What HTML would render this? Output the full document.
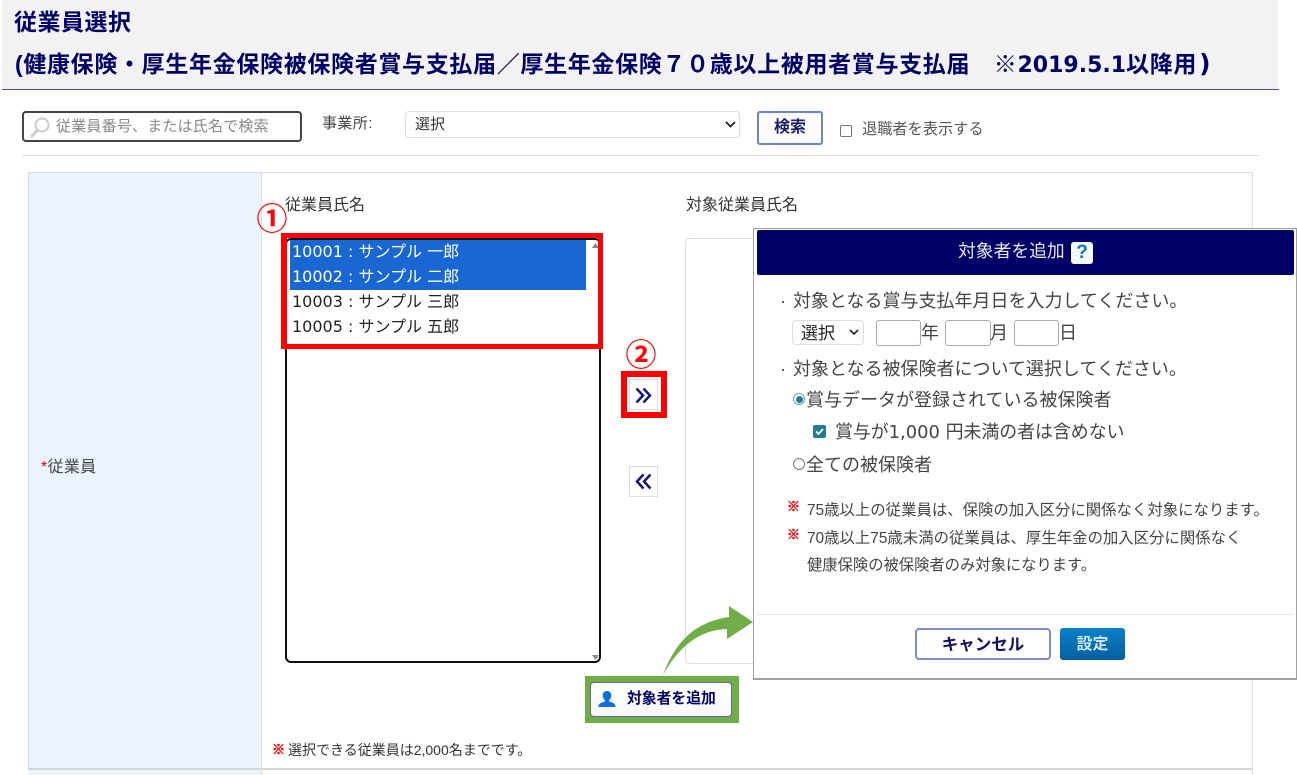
<!DOCTYPE html>
<html lang="ja"><head><meta charset="utf-8"><title>従業員選択</title>
<style>
html,body{margin:0;padding:0;background:#fff}
body{width:1297px;height:775px;position:relative;overflow:hidden;font-family:"Liberation Sans","Noto Sans CJK JP",sans-serif;color:#333;filter:blur(.3px)}
div,span.a{position:absolute;box-sizing:border-box}
.t{white-space:nowrap;line-height:20px;height:20px;font-size:15px}
.n{font-family:"DejaVu Sans","Noto Sans CJK JP",sans-serif}
.navy{color:#000066;font-weight:700}
.k{color:#f00;font-weight:700;-webkit-text-stroke:.6px #f00}
svg{position:absolute;overflow:visible}
</style></head><body>
<div style="left:2px;top:0;width:1276px;height:89px;background:#f2f2f2"></div>
<div style="left:2px;top:89px;width:1277px;height:1px;background:#4f4f9f"></div>
<div class="t navy" style="left:14px;top:12px;font-size:23px;letter-spacing:.5px">従業員選択</div>
<div class="t navy" style="left:15px;top:54px;font-size:23px;letter-spacing:.67px">(健康保険・厚生年金保険被保険者賞与支払届／厚生年金保険７０歳以上被用者賞与支払届　※<span class="n" style="font-size:22px;letter-spacing:0">2019.5.1</span>以降用<span class="n" style="font-size:25px;letter-spacing:0;margin-left:2px">)</span></div>

<div style="left:22px;top:111px;width:280px;height:31px;border:2px solid #444;border-radius:4px;background:#fff"></div>
<svg style="left:29px;top:116px" width="22" height="22" viewBox="0 0 22 22"><circle cx="13" cy="9" r="6.5" fill="none" stroke="#ccc" stroke-width="2"/><path d="M8.500 14L3 20" stroke="#ccc" stroke-width="3" stroke-linecap="round"/></svg>
<div class="t" style="left:56px;top:117px;font-size:15px;color:#888;letter-spacing:.2px">従業員番号、または氏名で検索</div>
<div class="t" style="left:322px;top:114px;font-size:15px;color:#444;letter-spacing:.4px">事業所:</div>
<div style="left:405px;top:111px;width:335px;height:27px;border:1px solid #ddd;border-radius:4px;background:#fff"></div>
<div class="t" style="left:415px;top:115px;font-size:15px">選択</div>
<svg style="left:725px;top:121px" width="11" height="7" viewBox="0 0 11 7"><path d="M1 1l4.500 4.500L10 1" fill="none" stroke="#222" stroke-width="1.800"/></svg>
<div style="left:757px;top:111px;width:66px;height:34px;border:2px solid #7384c6;border-radius:3px;background:#fbfbff"></div>
<div class="t navy" style="left:757px;width:66px;text-align:center;top:118px;font-size:16px;color:#1a2060;">検索</div>
<div style="left:840px;top:125px;width:12px;height:12px;border:1.500px solid #777;border-radius:2px;background:#fff"></div>
<div class="t" style="left:862px;top:120px;font-size:15.200px;color:#555">退職者を表示する</div>
<div style="left:22px;top:155px;width:1238px;height:1px;background:#ddd"></div>

<div style="left:28px;top:172px;width:1225px;height:598px;border:1px solid #ddd;border-bottom:2px solid #d4d4d4;background:#fff"></div>
<div style="left:29px;top:173px;width:232px;height:595px;background:#ebf4fc"></div>
<div style="left:261px;top:173px;width:1px;height:602px;background:#ddd"></div>
<div style="left:28px;top:770px;width:233px;height:5px;background:#ebf4fc"></div>
<div style="left:1252px;top:770px;width:1px;height:5px;background:#ddd"></div>
<div class="t" style="left:41px;top:458px;font-size:16px;letter-spacing:.3px;color:#444"><span style="color:#e00">*</span>従業員</div>

<div class="t" style="left:285px;top:196px;font-size:16px;color:#333">従業員氏名</div>
<div class="t" style="left:686px;top:196px;font-size:16px;color:#333">対象従業員氏名</div>

<div style="left:685px;top:238px;width:80px;height:426px;border:1px solid #ddd;border-radius:5px;background:#fff"></div>

<div style="left:285px;top:238px;width:316px;height:425px;border:2px solid #111;border-radius:6px;background:#fff"></div>
<div style="left:290px;top:240px;width:296px;height:50px;background:#1967d2"></div>
<div class="t n" style="left:292px;top:242px;font-size:16px;color:#fff">10001 : サンプル 一郎</div>
<div class="t n" style="left:292px;top:267px;font-size:16px;color:#fff">10002 : サンプル 二郎</div>
<div class="t n" style="left:292px;top:292px;font-size:16px;color:#222">10003 : サンプル 三郎</div>
<div class="t n" style="left:292px;top:317px;font-size:16px;color:#222">10005 : サンプル 五郎</div>
<svg style="left:592px;top:243px" width="7" height="5"><path d="M3.500 0L7 5H0z" fill="#888"/></svg>
<svg style="left:592px;top:655px" width="7" height="5"><path d="M3.500 5L7 0H0z" fill="#888"/></svg>
<div style="left:281px;top:233px;width:322px;height:116px;border:5px solid #ff0000;border-left-width:6px"></div>
<div class="t" style="left:256px;top:209px;width:32px;text-align:center;font-size:31px;line-height:22px;height:22px;font-weight:700;color:#f00">①</div>

<div class="t" style="left:625px;top:345px;width:32px;text-align:center;font-size:31px;line-height:22px;height:22px;font-weight:700;color:#f00">②</div>
<div style="left:621px;top:371px;width:46px;height:47px;background:#f00"></div>
<div style="left:627px;top:377px;width:34px;height:35px;background:#fff"></div>
<div style="left:629px;top:379px;width:29px;height:31px;border:1px solid #ddd;background:#fff"></div>
<svg style="left:635px;top:387px" width="18" height="17" viewBox="0 0 18 17"><path d="M1.500 1.500L8 8.500L1.500 15.500M8.500 1.500L15 8.500L8.500 15.500" fill="none" stroke="#15157f" stroke-width="2.500"/></svg>
<div style="left:629px;top:466px;width:29px;height:31px;border:1px solid #ddd;background:#fff"></div>
<svg style="left:635px;top:473px" width="18" height="17" viewBox="0 0 18 17"><path d="M8.500 1.500L2 8.500L8.500 15.500M15.500 1.500L9 8.500L15.500 15.500" fill="none" stroke="#15157f" stroke-width="2.500"/></svg>

<div style="left:585px;top:676px;width:154px;height:47px;background:#70ad47"></div>
<div style="left:590px;top:682px;width:142px;height:35px;border:1.500px solid #6a64b0;border-radius:4px;background:linear-gradient(#fff,#f7f7fb)"></div>
<svg style="left:597px;top:690px" width="20" height="18" viewBox="0 0 20 18"><path d="M10 1c3 0 4.300 2.200 4.300 4.500 0 2-1 3.800-2.300 4.800v1.200c2.500.8 6 1.500 6.500 4.500v1H1.500v-1c.5-3 4-3.700 6.500-4.500v-1.200C6.700 9.300 5.700 7.500 5.700 5.500 5.700 3.200 7 1 10 1z" fill="#0a6fd6"/></svg>
<div class="t navy" style="left:627px;top:689px;font-size:14.800px;">対象者を追加</div>

<div class="t k" style="left:272px;top:740px;font-size:13px">※</div>
<div class="t" style="left:288px;top:740px;font-size:14px;color:#333">選択できる従業員は2,000名までです。</div>

<svg style="left:0;top:0" width="1297" height="775"><path d="M663 675C676 640 696 622 729 617L729 606L753 622L727 639L727 629C700 630 680 645 663 675Z" fill="#70ad47"/></svg>

<div style="left:753px;top:228px;width:544px;height:452px;border:1px solid #a0a0a0;border-bottom:2px solid #a0a0a0;background:#fff"></div>
<div style="left:757px;top:230px;width:537px;height:45px;background:#000066;border-radius:2px"></div>
<div class="t" style="left:958px;top:241px;font-size:17.800px;color:#e8e8f4">対象者を追加</div>
<div style="left:1071px;top:242px;width:22px;height:22px;background:#f4f9fd;border-radius:3px"></div>
<div class="t" style="left:1071px;width:22px;text-align:center;top:243px;font-size:19px;font-weight:700;color:#0a78c8">?</div>

<div class="t" style="left:780px;top:291px;font-size:18px;color:#444">·</div>
<div class="t" style="left:793px;top:291px;font-size:18px;color:#444">対象となる賞与支払年月日を入力してください。</div>
<div style="left:792px;top:320px;width:72px;height:25px;border:1px solid #ddd;border-radius:4px;background:#fff"></div>
<div class="t" style="left:801px;top:324px;font-size:17px;color:#222">選択</div>
<svg style="left:849px;top:329px" width="10" height="6" viewBox="0 0 10 6"><path d="M1 1l4 4 4-4" fill="none" stroke="#222" stroke-width="1.600"/></svg>
<div style="left:876px;top:320px;width:45px;height:26px;border:1px solid #aaa;border-radius:3px"></div>
<div class="t" style="left:921px;top:323px;font-size:18px;color:#444">年</div>
<div style="left:945px;top:320px;width:46px;height:26px;border:1px solid #aaa;border-radius:3px"></div>
<div class="t" style="left:990px;top:323px;font-size:18px;color:#444">月</div>
<div style="left:1014px;top:320px;width:45px;height:26px;border:1px solid #aaa;border-radius:3px"></div>
<div class="t" style="left:1059px;top:323px;font-size:18px;color:#444">日</div>
<div class="t" style="left:780px;top:359px;font-size:18px;color:#444">·</div>
<div class="t" style="left:793px;top:359px;font-size:18px;color:#444">対象となる被保険者について選択してください。</div>
<div style="left:793px;top:393px;width:12px;height:12px;border:1.500px solid #5aa;border-radius:50%;background:#fff"></div>
<div style="left:795.500px;top:395.500px;width:7px;height:7px;border-radius:50%;background:#1f7f8f"></div>
<div class="t" style="left:806px;top:390px;font-size:18px;color:#444">賞与データが登録されている被保険者</div>
<div style="left:813px;top:425px;width:13px;height:13px;border-radius:2px;background:#1f7f8f"></div>
<svg style="left:813px;top:425px" width="13" height="13" viewBox="0 0 13 13"><path d="M3 6.500l2.500 2.500 4.500-5" fill="none" stroke="#fff" stroke-width="1.700"/></svg>
<div class="t n" style="left:835px;top:423px;font-size:17.900px;color:#444">賞与が1,000 円未満の者は含めない</div>
<div style="left:793px;top:458px;width:12px;height:12px;border:1.500px solid #777;border-radius:50%;background:#fff"></div>
<div class="t" style="left:806px;top:455px;font-size:18px;color:#444">全ての被保険者</div>

<div class="t k" style="left:787px;top:497px;font-size:13px">※</div>
<div class="t" style="left:807px;top:501px;font-size:15.400px;color:#444">75歳以上の従業員は、保険の加入区分に関係なく対象になります。</div>
<div class="t k" style="left:787px;top:525px;font-size:13px">※</div>
<div class="t" style="left:807px;top:529px;font-size:15.400px;color:#444">70歳以上75歳未満の従業員は、厚生年金の加入区分に関係なく</div>
<div class="t" style="left:807px;top:556px;font-size:15.300px;color:#444">健康保険の被保険者のみ対象になります。</div>
<div style="left:757px;top:614px;width:537px;height:1px;background:#e8e8e8"></div>
<div style="left:915px;top:628px;width:136px;height:32px;border:2px solid #7f8ad0;border-radius:4px;background:#fff"></div>
<div class="t navy" style="left:915px;width:136px;text-align:center;top:635px;font-size:16.500px;color:#101060">キャンセル</div>
<div style="left:1060px;top:628px;width:65px;height:32px;border-radius:3px;background:linear-gradient(#0a80c8,#055f9f)"></div>
<div class="t" style="left:1060px;width:65px;text-align:center;top:635px;font-size:16px;font-weight:700;color:#cfe6f5">設定</div>
</body></html>
